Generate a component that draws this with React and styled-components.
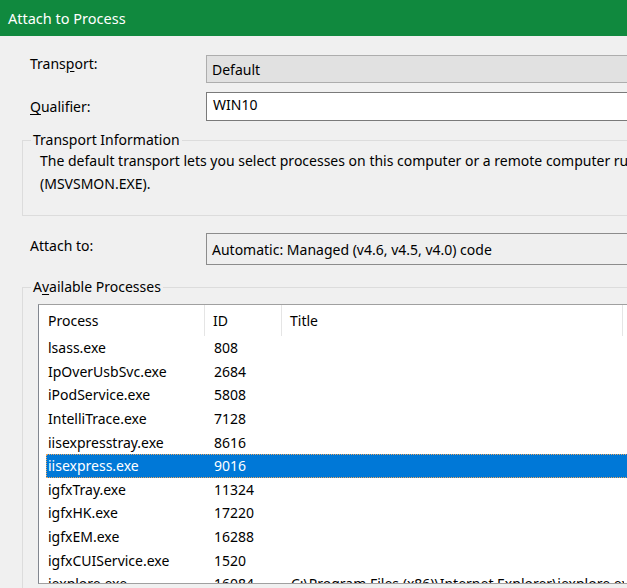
import styled, { createGlobalStyle } from "styled-components";

const GlobalStyle = createGlobalStyle`
  html, body {
    margin: 0;
    padding: 0;
    background: #f0f0f0;
    overflow: hidden;
  }
  body {
    font-family: "Noto Sans", "Open Sans", sans-serif;
    font-size: 14px;
    color: #000;
  }
`;

const Window = styled.div`
  width: 760px;
  height: 588px;
  background: #f0f0f0;
  overflow: hidden;
`;

const TitleBar = styled.div`
  height: 36px;
  background: #10893e;
  color: #fff;
  display: flex;
  align-items: center;
  padding-left: 8px;
  font-size: 14.5px;
`;

const Body = styled.div`
  padding: 19px 0 0 22px;
  display: flex;
  flex-direction: column;
`;

const FieldRow = styled.div`
  display: grid;
  grid-template-columns: 176px 1fr;
  align-items: start;
  margin-left: 8px;
  margin-top: ${(p) => p.$top || 0}px;
`;

const Label = styled.label`
  line-height: 20px;
  padding-top: ${(p) => p.$pad || 0}px;
  margin-top: ${(p) => (p.$pad < 0 ? p.$pad : 0)}px;
  white-space: nowrap;
`;

const U = styled.span`
  text-decoration: underline;
  text-underline-offset: 2px;
`;

const ComboBox = styled.div`
  height: ${(p) => p.$h}px;
  box-sizing: border-box;
  border: 1px solid ${(p) => p.$border || "#adadad"};
  border-right: none;
  background: ${(p) => p.$bg || "#e1e1e1"};
  display: flex;
  align-items: center;
  padding-left: 5px;
  white-space: nowrap;
`;

const TextInput = styled.div`
  height: 29px;
  box-sizing: border-box;
  border: 1px solid #7a7a7a;
  border-right: none;
  background: #fff;
  display: flex;
  align-items: center;
  padding: 0 0 4px 6px;
`;

const GroupBox = styled.fieldset`
  margin: ${(p) => p.$top}px 0 0 0;
  padding: 0 0 ${(p) => p.$bottom}px 8px;
  border: 1px solid #dcdcdc;
  border-right: none;
  min-width: 0;
`;

const Legend = styled.legend`
  padding: 0 2px;
  line-height: 20px;
`;

const Description = styled.div`
  padding-left: 9px;
  margin-top: -1px;
  line-height: 23px;
  white-space: nowrap;
`;

const ListBox = styled.div`
  margin: 7px 0 0 7px;
  height: 280px;
  box-sizing: border-box;
  border: 1px solid #a0a0a0;
  border-left-color: #828790;
  border-right: none;
  background: #fff;
  overflow: hidden;
`;

const columns = "166px 77px 341px 200px";

const HeaderRow = styled.div`
  display: grid;
  grid-template-columns: ${columns};
  height: 31px;
`;

const HeaderCell = styled.div`
  border-right: 1px solid #e5e5e5;
  display: flex;
  align-items: center;
  padding-left: ${(p) => (p.$first ? 9 : 8)}px;
  padding-bottom: 1px;
  white-space: nowrap;
`;

const Row = styled.div`
  display: grid;
  grid-template-columns: 159px 77px 341px 200px;
  margin-left: 7px;
  height: 23.6px;
  box-sizing: border-box;
  align-items: center;
  white-space: nowrap;
  background: ${(p) => (p.$selected ? "#0078d7" : "transparent")};
  color: ${(p) => (p.$selected ? "#fff" : "#000")};
  border-top: 1px dotted ${(p) => (p.$selected ? "#e9a660" : "transparent")};
  border-bottom: 1px dotted ${(p) => (p.$selected ? "#e9a660" : "transparent")};
  border-left: 1px dotted ${(p) => (p.$selected ? "#e9a660" : "transparent")};
`;

const Cell = styled.div`
  padding-left: ${(p) => (p.$first ? 1 : 8)}px;
  overflow: hidden;
`;

const processes = [
  ["lsass.exe", "808", ""],
  ["IpOverUsbSvc.exe", "2684", ""],
  ["iPodService.exe", "5808", ""],
  ["IntelliTrace.exe", "7128", ""],
  ["iisexpresstray.exe", "8616", ""],
  ["iisexpress.exe", "9016", ""],
  ["igfxTray.exe", "11324", ""],
  ["igfxHK.exe", "17220", ""],
  ["igfxEM.exe", "16288", ""],
  ["igfxCUIService.exe", "1520", ""],
  ["iexplore.exe", "16084", "C:\\Program Files (x86)\\Internet Explorer\\iexplore.exe"],
];

export default function App() {
  return (
    <>
      <GlobalStyle />
      <Window>
        <TitleBar>Attach to Process</TitleBar>
        <Body>
          <FieldRow>
            <Label $pad={-1}>
              Trans<U>p</U>ort:
            </Label>
            <ComboBox $h={28}>Default</ComboBox>
          </FieldRow>
          <FieldRow $top={9}>
            <Label $pad={5}>
              <U>Q</U>ualifier:
            </Label>
            <TextInput>WIN10</TextInput>
          </FieldRow>

          <GroupBox $top={9} $bottom={20}>
            <Legend>Transport Information</Legend>
            <Description>
              The default transport lets you select processes on this computer or a remote computer running the Visual Studio Remote Debugger
              <br />
              (MSVSMON.EXE).
            </Description>
          </GroupBox>

          <FieldRow $top={17}>
            <Label $pad={3}>Attach to:</Label>
            <ComboBox $h={32} $bg="#efefef" $border="#8c8c8c">
              Automatic: Managed (v4.6, v4.5, v4.0) code
            </ComboBox>
          </FieldRow>

          <GroupBox $top={12} $bottom={10}>
            <Legend>
              A<U>v</U>ailable Processes
            </Legend>
            <ListBox>
              <HeaderRow>
                <HeaderCell $first>Process</HeaderCell>
                <HeaderCell>ID</HeaderCell>
                <HeaderCell>Title</HeaderCell>
                <HeaderCell />
              </HeaderRow>
              {processes.map(([name, id, title]) => (
                <Row key={name} $selected={name === "iisexpress.exe"}>
                  <Cell $first>{name}</Cell>
                  <Cell>{id}</Cell>
                  <Cell>{title}</Cell>
                  <Cell />
                </Row>
              ))}
            </ListBox>
          </GroupBox>
        </Body>
      </Window>
    </>
  );
}
